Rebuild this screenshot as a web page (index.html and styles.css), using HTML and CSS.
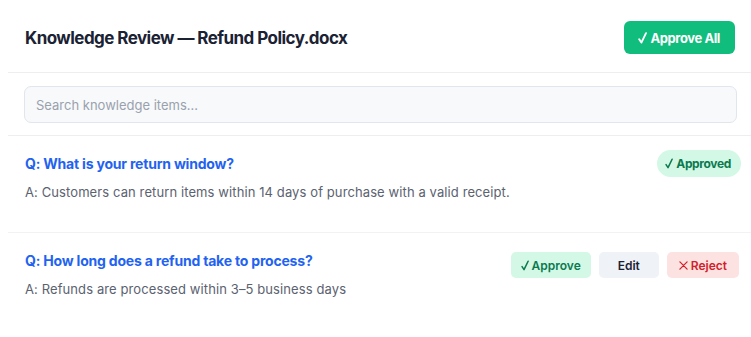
FILE: index.html
```html
<!DOCTYPE html>
<html lang="en">
<head>
<meta charset="utf-8">
<title>Knowledge Review</title>
<link rel="stylesheet" href="styles.css">
</head>
<body>
<div class="panel">
  <header class="header">
    <h1 class="title">Knowledge Review — Refund Policy.docx</h1>
    <button class="btn-primary"><svg class="icon-check" viewBox="0 0 9 12" aria-hidden="true"><path d="M1.2 7.2 L3.4 10.6 L8 1.2"/></svg>Approve All</button>
  </header>
  <div class="search-row">
    <input class="search" type="text" placeholder="Search knowledge items...">
  </div>
  <div class="item item-approved">
    <div class="item-body">
      <div class="question">Q: What is your return window?</div>
      <div class="answer">A: Customers can return items within 14 days of purchase with a valid receipt.</div>
    </div>
    <div class="actions">
      <span class="badge"><svg class="icon-check icon-sm" viewBox="0 0 9 12" aria-hidden="true"><path d="M1.2 7.2 L3.4 10.6 L8 1.2"/></svg>Approved</span>
    </div>
  </div>
  <div class="item item-pending">
    <div class="item-body">
      <div class="question">Q: How long does a refund take to process?</div>
      <div class="answer">A: Refunds are processed within 3–5 business days</div>
    </div>
    <div class="actions actions-pending">
      <button class="btn btn-approve"><svg class="icon-check icon-sm" viewBox="0 0 9 12" aria-hidden="true"><path d="M1.2 7.2 L3.4 10.6 L8 1.2"/></svg>Approve</button>
      <button class="btn btn-edit">Edit</button>
      <button class="btn btn-reject"><svg class="icon-x" viewBox="0 0 10 10" aria-hidden="true"><path d="M1 1 L9 9 M9 1 L1 9"/></svg>Reject</button>
    </div>
  </div>
</div>
</body>
</html>
```
FILE: styles.css
```css
* { box-sizing: border-box; }
body {
  margin: 0 0 0 8px;
  background: #ffffff;
  font-family: Inter, "Noto Sans", sans-serif;
  color: #1e293b;
}
.panel { width: 743px; }
.header {
  display: flex;
  align-items: center;
  justify-content: space-between;
  padding: 21px 16px 18px 17px;
  border-bottom: 1px solid #eceef2;
}
.title {
  margin: 0;
  font-size: 17px;
  font-weight: 700;
  color: #1a2233;
  letter-spacing: -0.55px;
}
.icon-check {
  width: 9px;
  height: 12px;
  margin-right: 3px;
  fill: none;
  stroke: currentColor;
  stroke-width: 1.9;
  stroke-linecap: round;
  stroke-linejoin: round;
}
.icon-sm { width: 8px; height: 11px; stroke-width: 1.7; }
.icon-x {
  width: 9px;
  height: 9px;
  margin-right: 3px;
  fill: none;
  stroke: currentColor;
  stroke-width: 1.4;
  stroke-linecap: round;
}
.btn-primary {
  display: inline-flex;
  align-items: center;
  height: 33px;
  padding: 0 15px 0 14px;
  border: none;
  border-radius: 6px;
  background: #10bd7d;
  color: #ffffff;
  font-family: inherit;
  font-size: 13px;
  font-weight: 700;
  letter-spacing: -0.4px;
}
.search-row {
  padding: 13px 14px 12px 16px;
  border-bottom: 1px solid #eceef2;
}
.search {
  display: block;
  width: 100%;
  height: 37px;
  padding: 0 11px;
  border: 1px solid #e1e6ee;
  border-radius: 7px;
  background: #f7f9fb;
  font-family: inherit;
  font-size: 13px;
  color: #1e293b;
  outline: none;
}
.search::placeholder { color: #9aa1ad; }
.item {
  display: flex;
  justify-content: space-between;
  align-items: flex-start;
  padding: 14px 10px 30px 17px;
}
.item-approved { border-bottom: 1px solid #f1f2f5; }
.item-pending { padding-right: 12px; }
.question {
  line-height: 28px;
  font-size: 14px;
  font-weight: 700;
  color: #1f63f0;
  letter-spacing: -0.2px;
}
.answer {
  margin-top: 4px;
  line-height: 20px;
  font-size: 13px;
  color: #5b6270;
  letter-spacing: 0.1px;
}
.actions { display: flex; gap: 8px; }
.actions-pending { margin-top: 5px; }
.badge {
  display: inline-flex;
  align-items: center;
  height: 27px;
  padding: 0 10px 0 8px;
  border-radius: 14px;
  background: #d3f8e6;
  color: #0b7a4f;
  font-size: 12px;
  font-weight: 700;
  letter-spacing: -0.35px;
}
.btn {
  display: inline-flex;
  align-items: center;
  justify-content: center;
  height: 26px;
  padding: 0 12px;
  border: none;
  border-radius: 5px;
  font-family: inherit;
  font-size: 12px;
  font-weight: 600;
}
.btn-approve { padding: 0 10px; background: #d3f8e6; color: #0b7a4f; }
.btn-edit { min-width: 60px; background: #eff2f6; color: #1a2233; }
.btn-reject { background: #fde2e2; color: #d0202a; }
```
